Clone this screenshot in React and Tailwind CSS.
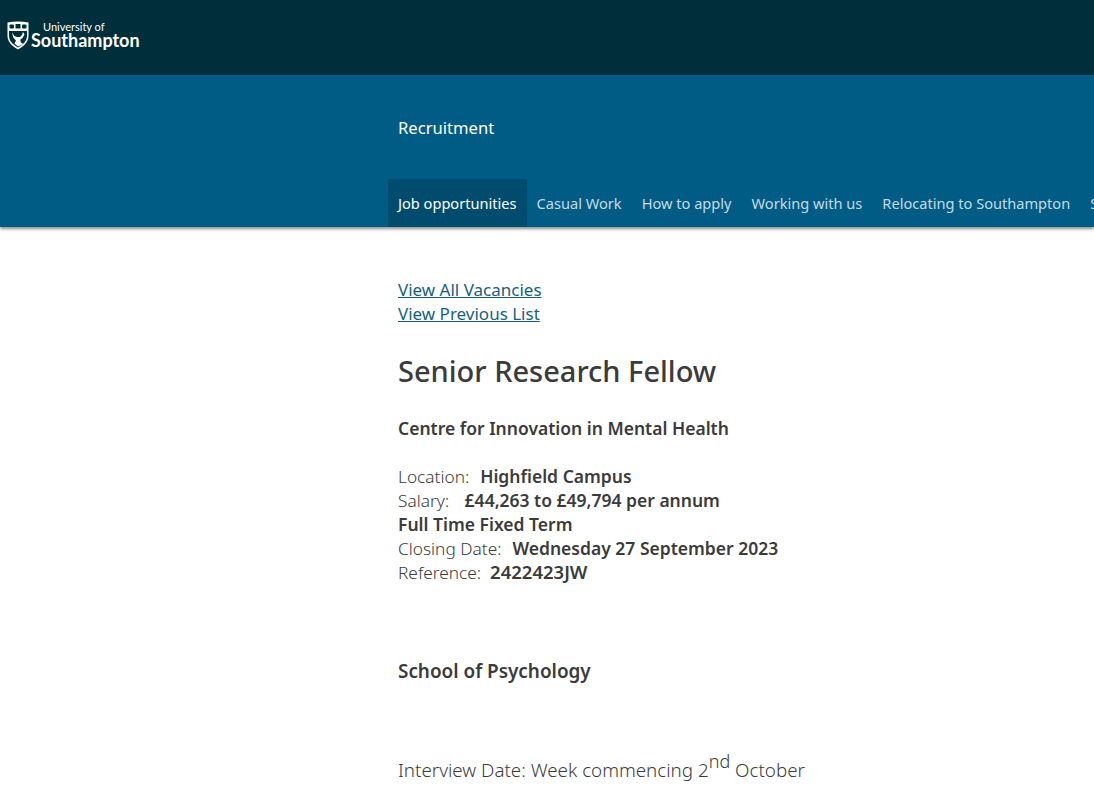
const navItems = ["Job opportunities", "Casual Work", "How to apply", "Working with us", "Relocating to Southampton", "Staff benefits"];

function Crest() {
  return (
    <svg width="22" height="29" viewBox="0 0 22 29" className="shrink-0">
      <path d="M0.500 1.500Q11 -0.500 21.500 1.500V15C21.500 21 16.500 25.500 11 28.500C5.500 25.500 0.500 21 0.500 15z" fill="#fff" />
      <path d="M2 10H20V15C20 20 15.500 24 11 26.500C6.500 24 2 20 2 15z" fill="#002e3b" />
      <rect x="2.500" y="3.500" width="4.500" height="4" rx="1" fill="#002e3b" />
      <rect x="8.500" y="3" width="5" height="4.500" fill="#002e3b" />
      <rect x="15" y="3.500" width="4.500" height="4" rx="1" fill="#002e3b" />
      <path d="M5 11.500L7.500 15L10 16L13 16L15 14L16 11L17.500 13.500L15.500 17L13.500 18.500L13.500 21L16 23L11 25.500L7.500 22.500L9 19.500L6.500 17z" fill="#fff" />
    </svg>
  );
}

export default function App() {
  return (
    <div className="h-[792px] w-full overflow-hidden bg-white text-[17px] leading-6 text-[#3b3b3b] font-['Noto_Sans','Open_Sans',sans-serif]">
      <div className="flex h-[75px] items-start bg-[#002e3b] pl-[7px] pt-[21px] text-white">
        <Crest />
        <div className="-ml-[20px] flex flex-col pl-[22px] font-['Lato',sans-serif]">
          <span className="pl-[12px] text-[11px] leading-[12px]">University of</span>
          <span className="-mt-[1px] text-[18px] leading-[16px] font-bold">Southampton</span>
        </div>
      </div>
      <div className="relative flex h-[152px] flex-col bg-[#005c85] pl-[388px] shadow-[0_2px_3px_rgba(0,0,0,0.45)]">
        <div className="flex-1 pl-[10px] pt-[41px] text-[16.600px] text-white">Recruitment</div>
        <nav className="flex h-[48px] whitespace-nowrap text-[14.600px]">
          {navItems.map((item, i) => (
            <a key={item} className={i === 0 ? "bg-[#004c6e] px-[10px] pt-[12px] text-white" : "px-[10px] pt-[12px] text-[#c4dbe6]"}>
              {item}
            </a>
          ))}
        </nav>
      </div>
      <main className="pl-[398px] pt-[51px]">
        <a className="block text-[#17607f] underline">View All Vacancies</a>
        <a className="block text-[#17607f] underline">View Previous List</a>
        <h1 className="mt-[25px] text-[29px] leading-[40px] font-medium">Senior Research Fellow</h1>
        <p className="mt-[25px] text-[17.500px] font-semibold">Centre for Innovation in Mental Health</p>
        <div className="mt-[24px] text-[17.300px] font-light">
          <div className="h-6">Location:&nbsp; <strong className="ml-[2px] text-[17.500px] font-semibold">Highfield Campus</strong></div>
          <div className="h-6">Salary: &nbsp; <strong className="ml-[2px] text-[17.500px] font-semibold">£44,263 to £49,794 per annum</strong></div>
          <div className="h-6 text-[17.500px] font-semibold">Full Time Fixed Term</div>
          <div className="h-6">Closing Date:&nbsp; <strong className="ml-[2px] text-[17.500px] font-semibold">Wednesday 27 September 2023</strong></div>
          <div className="h-6">Reference:&nbsp; <strong className="text-[18.500px] font-semibold">2422423JW</strong></div>
        </div>
        <p className="mt-[75px] h-6 text-[18.900px] font-semibold">School of Psychology</p>
        <p className="mt-[75px] h-6 text-[18.800px] font-light">Interview Date: Week commencing 2<sup className="text-[18px]">nd</sup> October</p>
      </main>
    </div>
  );
}
